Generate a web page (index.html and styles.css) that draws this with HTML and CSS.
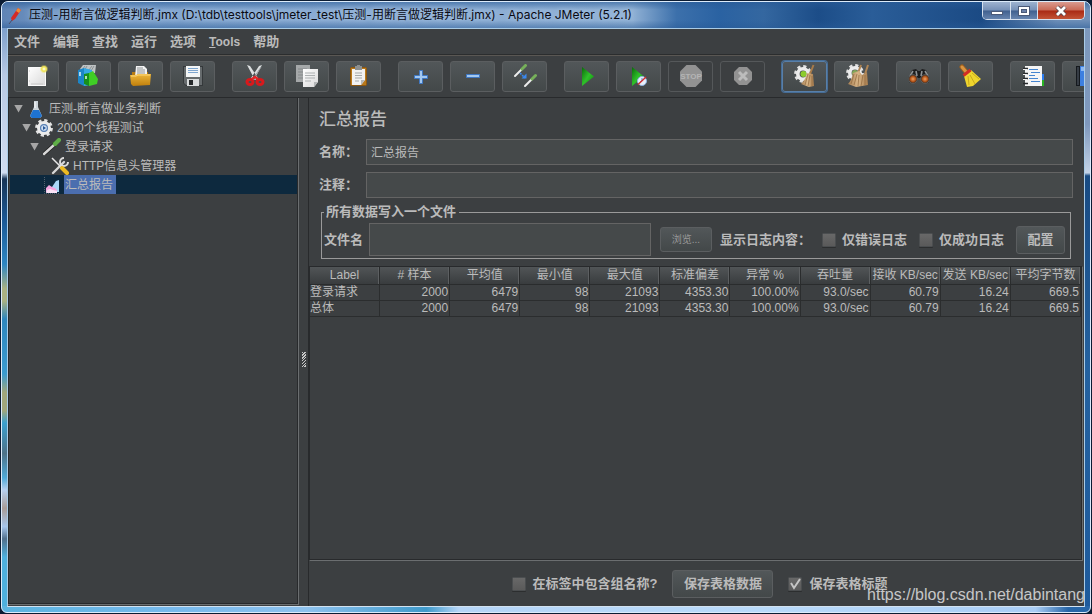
FILE: index.html
```html
<!DOCTYPE html>
<html lang="zh-CN">
<head>
<meta charset="utf-8">
<title>Apache JMeter (5.2.1)</title>
<link rel="stylesheet" href="styles.css">
</head>
<body>
<svg class="defs" width="0" height="0" aria-hidden="true">
  <defs>
    <linearGradient id="paper" x1="0" y1="0" x2="1" y2="1"><stop offset="0" stop-color="#fff"/><stop offset="1" stop-color="#d9d9d9"/></linearGradient>
    <linearGradient id="gold" x1="0" y1="0" x2="0" y2="1"><stop offset="0" stop-color="#edb73c"/><stop offset="1" stop-color="#c07f0c"/></linearGradient>
    <linearGradient id="green" x1="0" y1="0" x2="1" y2="1"><stop offset="0" stop-color="#0b6a0b"/><stop offset=".5" stop-color="#2fc02a"/><stop offset="1" stop-color="#0a8a0a"/></linearGradient>
    <linearGradient id="straw" x1="0" y1="0" x2="1" y2="0"><stop offset="0" stop-color="#a67f54"/><stop offset=".5" stop-color="#d8b587"/><stop offset="1" stop-color="#a67c4e"/></linearGradient>
    <radialGradient id="lens"><stop offset="0" stop-color="#f0a060"/><stop offset=".6" stop-color="#b5561a"/><stop offset="1" stop-color="#3a1d0c"/></radialGradient>
    <radialGradient id="glow"><stop offset="0" stop-color="#fff"/><stop offset=".4" stop-color="#f7ee6a"/><stop offset="1" stop-color="#f0e040" stop-opacity="0"/></radialGradient>
    <g id="gear">
      <circle r="7.4" fill="none" stroke="#e2e2e2" stroke-width="3" stroke-dasharray="3.1 2.71"/>
      <circle r="5.2" fill="none" stroke="#ececec" stroke-width="3.6"/>
    </g>
    <g id="pipette">
      <path d="M1 10 6.500 4.500" stroke="#4e5254" stroke-width="3.400" stroke-linecap="round"/>
      <path d="M0 11 6.500 4.500" stroke="#ececec" stroke-width="2" stroke-linecap="round"/>
      <path d="M7 4 10.500 .5" stroke="#76b05a" stroke-width="3" stroke-linecap="round"/>
    </g>
  </defs>
</svg>

<div class="window">
  <header class="titlebar">
    <svg class="app-icon" viewBox="0 0 14 18" aria-hidden="true"><path d="M10 1 13 3 7 12 4 14 3 11Z" fill="#d42a25"/><path d="M10 1 13 3 11 6 8 4Z" fill="#f08a35"/><path d="M4 13 1 17" stroke="#49506a"/></svg>
    <h1 class="window-title">压测-用断言做逻辑判断.jmx (D:\tdb\testtools\jmeter_test\压测-用断言做逻辑判断.jmx) - Apache JMeter (5.2.1)</h1>
    <div class="window-controls">
      <button class="control" type="button" aria-label="最小化"><svg viewBox="0 0 14 12"><rect x="1.500" y="6.500" width="11" height="3" fill="#fff" stroke="#4b5a78"/></svg></button>
      <button class="control" type="button" aria-label="最大化"><svg viewBox="0 0 14 12"><rect x="1.500" y="1.500" width="11" height="9" fill="#fff" stroke="#4b5a78"/><rect x="4.500" y="4.500" width="5" height="3" fill="#6a80a8" stroke="#4b5a78"/></svg></button>
      <button class="control control-close" type="button" aria-label="关闭"><svg viewBox="0 0 14 12"><path d="M3 2 11 10M11 2 3 10" stroke="#57424a" stroke-width="4.500"/><path d="M3 2 11 10M11 2 3 10" stroke="#fff" stroke-width="2.800"/></svg></button>
    </div>
  </header>

  <div class="client">
    <nav class="menubar">
      <button type="button">文件</button>
      <button type="button">编辑</button>
      <button type="button">查找</button>
      <button type="button">运行</button>
      <button type="button">选项</button>
      <button class="menu-latin" type="button"><u>T</u>ools</button>
      <button type="button">帮助</button>
    </nav>

    <div class="toolbar">
      <div class="tool-group">
        <button class="tool" type="button" aria-label="新建"><svg viewBox="0 0 25 25"><rect x="4.500" y="3.500" width="17" height="18" fill="url(#paper)" stroke="#fafafa"/><path d="M5 7h1M5 17h1M7 20h12" stroke="#c9c9c9"/><circle cx="20" cy="5" r="4.500" fill="url(#glow)"/><circle cx="20" cy="5" r="2.500" fill="none" stroke="#ece05a"/></svg></button>
        <button class="tool" type="button" aria-label="模板"><svg viewBox="0 0 25 25"><path d="M4 5 7 1h5l-1 8H5zM10 5l2-4h8l-1 8h-8z" fill="#bfc3c4"/><path d="M6 6 9 2M8 7l3-5M13 6l3-4M15 7l3-5" stroke="#8c9193"/><path d="M2 6 8 4v18l-6-3z" fill="#1c86c8"/><path d="M8 4 16 6v15l-8 1z" fill="#35a9e4"/><path d="M4 8v4" stroke="#dff2fb" stroke-width="1.500"/><path d="M8 10 13 9v13l-5-2z" fill="#178f1c"/><path d="M13 9 17 7l5 8-1 5-8 2z" fill="#3fce25"/><path d="M10 12v3" stroke="#e3fbe0" stroke-width="1.500"/></svg></button>
        <button class="tool" type="button" aria-label="打开"><svg viewBox="0 0 25 25"><path d="M4 10V8h16v5H4z" fill="#b77b12"/><path d="M8 2h8l3 3v8H7z" fill="#f3f3f3"/><path d="M9 4h6M9 6h8M9 8h8M9 10h8" stroke="#8e9395"/><path d="M2 11h6l2-1h13l-1 11-17 1-2-2z" fill="url(#gold)"/><path d="M3 12h5l2-1h12" stroke="#ffd878" fill="none"/></svg></button>
        <button class="tool" type="button" aria-label="保存"><svg viewBox="0 0 25 25"><path d="M3 2h20v20H6l-3-3z" fill="#35393b"/><path d="M4 3h18v18H6l-2-2z" fill="#666b6d"/><rect x="6" y="2" width="14" height="11" fill="#f3f5f6"/><path d="M8 4.500h10M8 6.500h10M8 8.500h10" stroke="#7fa6cf"/><rect x="7" y="15" width="12" height="7" fill="#d9dcdd"/><rect x="9" y="16" width="4" height="5" fill="#25282a"/></svg></button>
      </div>
      <div class="tool-group">
        <button class="tool" type="button" aria-label="剪切"><svg viewBox="0 0 25 25"><path d="M5 1 8 2l8 12-3 2zM20 1l-3 1-8 12 3 2z" fill="#dcdfe0"/><path d="M19 3 11 15" stroke="#9ba0a2"/><ellipse cx="8" cy="18" rx="3" ry="2.600" fill="none" stroke="#d8191c" stroke-width="3"/><ellipse cx="18" cy="18" rx="3" ry="2.600" fill="none" stroke="#d8191c" stroke-width="3"/><path d="M10 15l3-2 3 2" stroke="#e22326" stroke-width="2.500" fill="none"/></svg></button>
        <button class="tool" type="button" aria-label="复制"><svg viewBox="0 0 25 25"><path d="M2 1h14v17H2z" fill="#a5a8a9"/><path d="M4 5h9M4 8h9M4 11h9M4 14h9" stroke="#85898a"/><path d="M9 5h15v13l-4 5H9z" fill="url(#paper)"/><path d="M11 9h10M11 11.500h10M11 14h10M11 17h6" stroke="#acb0b1"/><path d="M24 18h-4v5z" fill="#b3b6b7"/></svg></button>
        <button class="tool" type="button" aria-label="粘贴"><svg viewBox="0 0 25 25"><rect x="4.500" y="3.500" width="16" height="18" rx="1" fill="#b8791c" stroke="#8c5710"/><path d="M6 5h13v11l-4 5H6z" fill="#f2f2f2"/><path d="M9 2h7v4H9zM11 1h3v2h-3z" fill="#8c9091"/><path d="M9 9h7M9 11.500h7M9 14h7M9 17h4" stroke="#a5a9aa"/><path d="M19 16h-4v5z" fill="#b5b8b9"/></svg></button>
      </div>
      <div class="tool-group">
        <button class="tool" type="button" aria-label="展开"><svg viewBox="0 0 25 25"><path d="M11.500 6.500h3v5h5v3h-5v5h-3v-5h-5v-3h5z" fill="#a3c8f0" stroke="#3f78c4"/></svg></button>
        <button class="tool" type="button" aria-label="折叠"><svg viewBox="0 0 25 25"><path d="M6.500 10.500h13v3h-13z" fill="#a3c8f0" stroke="#3f78c4"/></svg></button>
        <button class="tool" type="button" aria-label="切换"><svg viewBox="0 0 25 25"><use href="#pipette" x="3" y="1"/><use href="#pipette" x="13" y="11"/><path d="M8 9 13 14" stroke="#3987f0" stroke-width="1.600" stroke-dasharray="2 1"/><path d="M14.500 9.500v5h-5z" fill="#3987f0"/></svg></button>
      </div>
      <div class="tool-group">
        <button class="tool" type="button" aria-label="启动"><svg viewBox="0 0 25 25"><path d="M8 3 20 12.500 8 22z" fill="url(#green)"/></svg></button>
        <button class="tool" type="button" aria-label="无停顿启动"><svg viewBox="0 0 25 25"><path d="M6 3 18 12.500 6 22z" fill="url(#green)"/><circle cx="16" cy="17" r="4.500" fill="#e7effa" stroke="#8fb2e0"/><path d="M16 14v3l-2 1" stroke="#5787c6" fill="none"/><path d="M12 20.500 20 13" stroke="#d52d2d" stroke-width="1.400"/></svg></button>
        <button class="tool tool-off" type="button" aria-label="停止" disabled><svg viewBox="0 0 25 25"><path d="M8.500 1h9L24 7.500v9L17.500 23h-9L2 16.500v-9z" fill="#929292"/><text class="stop-word" x="13" y="15" text-anchor="middle">STOP</text></svg></button>
        <button class="tool tool-off" type="button" aria-label="关闭测试" disabled><svg viewBox="0 0 25 25"><path d="M9 3h8l5 5v8l-5 5H9l-5-5V8z" fill="#929292"/><path d="M9 8l8 8M17 8l-8 8" stroke="#bcbcbc" stroke-width="3"/></svg></button>
      </div>
      <div class="tool-group">
        <button class="tool tool-focus" type="button" aria-label="清除"><svg viewBox="0 0 25 25"><use href="#gear" x="11" y="10"/><circle cx="11.500" cy="10" r="3" fill="#8ccc2c"/><path d="M21.500 1 18 10" stroke="#a87b49" stroke-width="2"/><path d="M15 9l6 1 1 12-5 1-8-3c3-3 5-6 6-11z" fill="url(#straw)"/><path d="M16 10l-3 11M18 11l-2 11M20 12v10" stroke="#8f683e" stroke-width=".7"/></svg></button>
        <button class="tool" type="button" aria-label="清除全部"><svg viewBox="0 0 25 25"><use href="#gear" x="11" y="9"/><circle cx="11" cy="9" r="3" fill="#84a85a"/><path d="M17 1 14 9M24 1l-3 9" stroke="#b08554" stroke-width="2"/><path d="M9 9l6-2 3 4 5-3 1 13-6 1-6 1-8-3c3-3 4-7 5-11z" fill="url(#straw)"/><path d="M10 10 7 20M13 10l-3 11M15 11l-1 11M19 11l-2 11M21 11v10" stroke="#8f683e" stroke-width=".7"/></svg></button>
      </div>
      <div class="tool-group">
        <button class="tool" type="button" aria-label="查找"><svg viewBox="0 0 25 25"><path d="M6 6l4-1 2 2h2l2-2 4 1 4 9-2 4-5-1-2-4h-4l-2 4-5 1-2-4z" fill="#1c1d1e"/><path d="M7 7 4 12M19 7l3 5M10 7l1 5M16 7l-1 5" stroke="#8e9294" stroke-width="1.600"/><circle cx="7" cy="15" r="4.300" fill="url(#lens)" stroke="#5c5f60"/><circle cx="19" cy="15" r="4.300" fill="url(#lens)" stroke="#5c5f60"/></svg></button>
        <button class="tool" type="button" aria-label="重置查找"><svg viewBox="0 0 25 25"><path d="M4 3 9 9" stroke="#9d5f1d" stroke-width="5" stroke-linecap="round"/><path d="M4 3 9 9" stroke="#d99442" stroke-width="3" stroke-linecap="round"/><path d="M6 12 13 6l10 9-8 7-6 1z" fill="#efd52d"/><path d="M10 12l1 9M12 11l5 9M14 9l7 6" stroke="#c9ab1c"/><path d="M5.500 11.500 12.500 6" stroke="#d42c24" stroke-width="3"/></svg></button>
      </div>
      <div class="tool-group">
        <button class="tool" type="button" aria-label="函数助手"><svg viewBox="0 0 25 25"><path d="M21 10h3v6h-3z" fill="#2c7df0"/><path d="M21 16h3v6h-3z" fill="#27b323"/><path d="M5 2h17v20H5z" fill="#f5f5f5"/><path d="M9 5.500h9M11 8.500h9M9 11.500h6M9 14.500h9M11 17.500h9" stroke="#4585d0"/><path d="M3 4.500h5M3 9.500h5M3 14.500h5M3 19.500h5" stroke="#292c2e" stroke-width="1.300"/><path d="M3 5.500h4M3 10.500h4M3 15.500h4" stroke="#eee"/></svg></button>
        <button class="tool" type="button" aria-label="帮助"><svg viewBox="0 0 25 25"><path d="M4 2h5v20H4z" fill="#15191e"/><path d="M6 3v18" stroke="#59616b"/><path d="M8 2h15v20H8z" fill="#3d7fe0"/><path d="M9 3h13v4H9z" fill="#8ab8f4"/></svg></button>
      </div>
    </div>

    <main class="workspace">
      <aside class="tree-pane">
        <ul class="tree">
          <li class="node level-0"><span class="twisty"></span><svg viewBox="0 0 18 18"><path d="M7 1h4v6l4 9-2 2H5l-2-2 4-9z" fill="#ccd4da"/><path d="M6 10h6l3 6-2 2H5l-2-2z" fill="#1e73d2"/><path d="M8 2v6" stroke="#fff"/></svg><span class="node-label">压测-断言做业务判断</span></li>
          <li class="node level-1"><span class="twisty"></span><svg viewBox="0 0 18 18"><use href="#gear" x="9" y="9"/><circle cx="9" cy="9" r="4" fill="#5c84b8"/><circle cx="9" cy="9" r="2.800" fill="#cfe0f4"/><path d="M8 7l3 2-3 2z" fill="#2b5a99"/></svg><span class="node-label">2000个线程测试</span></li>
          <li class="node level-2"><span class="twisty"></span><svg viewBox="0 0 18 18"><path d="M2 15 11 7" stroke="#222" stroke-width="4" stroke-linecap="round"/><path d="M1 16 11 7" stroke="#d8d8d8" stroke-width="2.400" stroke-linecap="round"/><path d="M10 4l4 4" stroke="#315f24" stroke-width="2"/><path d="M12 6l4-4" stroke="#5fae48" stroke-width="4" stroke-linecap="round"/></svg><span class="node-label">登录请求</span></li>
          <li class="node level-3"><span class="twisty twisty-none"></span><svg viewBox="0 0 18 18"><path d="M2 16 13 5" stroke="#d7d7d7" stroke-width="2.400" stroke-linecap="round"/><path d="M13 1a4 4 0 1 0 4 4" stroke="#dcdcdc" stroke-width="2" fill="none"/><path d="M1 1 10 10" stroke="#e6e6e6" stroke-width="1.500"/><path d="M11 11l5 5" stroke="#eebb22" stroke-width="4" stroke-linecap="round"/></svg><span class="node-label">HTTP信息头管理器</span></li>
          <li class="node level-2 node-selected"><span class="twisty twisty-none"></span><svg viewBox="0 0 18 18"><path d="M1.500 1v16.500H17" stroke="#54606c" stroke-dasharray="1 1" fill="none"/><path d="M9 11l4-6 3-1v12H9z" fill="#a9d7f7"/><path d="M3 16v-4l3-3 3 2 3 1 2 2v2z" fill="#f4a5df"/><path d="M4 14l3-1 3 1 4 1v2H3z" fill="#fbe3f6"/></svg><span class="node-label">汇总报告</span></li>
        </ul>
      </aside>

      <div class="splitter"><span class="grip"></span></div>

      <section class="report">
        <div class="form">
          <h2 class="report-title">汇总报告</h2>
          <div class="field"><label for="name">名称：</label><input class="text" id="name" type="text" value="汇总报告"></div>
          <div class="field"><label for="comment">注释：</label><input class="text" id="comment" type="text"></div>
          <fieldset class="output">
            <legend>所有数据写入一个文件</legend>
            <div class="output-row">
              <label for="file">文件名</label>
              <input class="text text-file" id="file" type="text">
              <button class="button button-browse" type="button">浏览...</button>
              <span class="log-label">显示日志内容：</span>
              <label class="check"><input type="checkbox">仅错误日志</label>
              <label class="check"><input type="checkbox">仅成功日志</label>
              <button class="button button-config" type="button">配置</button>
            </div>
          </fieldset>
        </div>

        <div class="table-pane">
          <table class="results">
            <thead><tr><th>Label</th><th># 样本</th><th>平均值</th><th>最小值</th><th>最大值</th><th>标准偏差</th><th>异常 %</th><th>吞吐量</th><th>接收 KB/sec</th><th>发送 KB/sec</th><th>平均字节数</th></tr></thead>
            <tbody>
              <tr><td>登录请求</td><td>2000</td><td>6479</td><td>98</td><td>21093</td><td>4353.30</td><td>100.00%</td><td>93.0/sec</td><td>60.79</td><td>16.24</td><td>669.5</td></tr>
              <tr><td>总体</td><td>2000</td><td>6479</td><td>98</td><td>21093</td><td>4353.30</td><td>100.00%</td><td>93.0/sec</td><td>60.79</td><td>16.24</td><td>669.5</td></tr>
            </tbody>
          </table>
        </div>

        <footer class="actions">
          <label class="check"><input type="checkbox">在标签中包含组名称?</label>
          <button class="button button-save" type="button">保存表格数据</button>
          <label class="check"><input type="checkbox" checked>保存表格标题</label>
        </footer>
      </section>
    </main>
  </div>
  <span class="watermark">https://blog.csdn.net/dabintang</span>
</div>
</body>
</html>
```
FILE: styles.css
```css
* { box-sizing: border-box; }

:root {
  --bg: #3c3f41;
  --ink: #bbbbbb;
  --line-dark: #282a2c;
  --line-light: #6b6e70;
}

body {
  margin: 0;
  height: 100vh;
  padding: 1px;
  background: #0b1c33;
  color: var(--ink);
  font: 12px/16px "Liberation Sans", "Noto Sans CJK SC", sans-serif;
}

.defs { position: absolute; }

button, input { font: inherit; color: inherit; margin: 0; }

.window {
  position: relative;
  height: 100%;
  display: flex;
  flex-direction: column;
  padding: 0 5px 5px;
  border: 1px solid #dcebfa;
  border-radius: 7px 7px 6px 6px;
  background:
    linear-gradient(90deg, #5bb4e0, #78b9ec 16%, #8ec2ee 28%, #3f9acb 39%, #b5d5f7 42%, #b9dafa 70%, #a9cdf5 95%, #2766a8 98%) bottom / 100% 6px no-repeat,
    linear-gradient(#5d88bd, #b7c9e4 12%, #d0dcf0 28%, #173456 29%, #1c5a97 36%, #2e86c2 43%, #a9b183 47%, #a9b183 49%, #2e86bd 52%, #3b9bcf 61%, #a0a67c 64%, #a0a67c 67%, #3ba0cf 69%, #4e7288 74%, #50aad8 78%, #b7d0f0 80%, #a89c97 83%, #a6c6ec 86%, #51708c 88%, #4eb0de 91%) left / 6px 100% no-repeat,
    linear-gradient(#7d99bd, #7f98bd 20%, #c3d2e6 28%, #184a82 28.500%, #24619f 60%, #1d5a9c) right / 6px 100% no-repeat,
    #5585bb;
}

.titlebar {
  display: flex;
  align-items: flex-start;
  gap: 7px;
  height: 26px;
  flex: none;
  margin: 0 -5px;
  padding-left: 6px;
  border-radius: 6px 6px 0 0;
  background:
    linear-gradient(rgba(40, 90, 150, .6), transparent 30%, transparent 70%, rgba(40, 90, 150, .5)),
    linear-gradient(90deg, #5f84b5, #7ba0cb 8%, #86a8d0 30%, #8fb0d4 58%, #3c70ab 62%, #2a62a2 66%, #3467a0 70%, #1c4d88 75%, #2a5d98 80%, #1b4a84 90%, #6e8fb8 97%);
}

.app-icon { width: 14px; height: 18px; margin-top: 5px; }

.window-title {
  flex: 1;
  margin: 0;
  padding-top: 5px;
  font: 12px/16px Inter, "Noto Sans CJK SC", sans-serif;
  color: #0a0a12;
  white-space: nowrap;
  text-shadow: 0 0 6px #b9d0ec;
}

.window-controls {
  display: flex;
  margin-right: 5px;
  border: 1px solid #d5e0ee;
  border-top: 0;
  border-radius: 0 0 5px 5px;
  overflow: hidden;
}

.control {
  display: flex;
  align-items: center;
  justify-content: center;
  width: 27px;
  height: 17px;
  padding: 0;
  border: 0;
  border-right: 1px solid #d5e0ee;
  background: linear-gradient(#9db2cf, #7690b6 48%, #40608f 52%, #6684ae);
}

.control:first-child { width: 28px; }
.control svg { width: 14px; height: 12px; }

.control-close {
  width: 46px;
  border-right: 0;
  background: linear-gradient(#d99b90, #c96955 48%, #a92914 52%, #c25336);
}

.client {
  flex: 1;
  min-height: 0;
  display: flex;
  flex-direction: column;
  border: 1px solid #a9cbe6;
  border-bottom-color: #d2e2f0;
  background: var(--bg);
}

.menubar {
  display: flex;
  gap: 13px;
  height: 26px;
  flex: none;
  padding: 0 6px;
  border-bottom: 1px solid #2b2d2e;
  box-shadow: 0 1px #5a5753;
}

.menubar button {
  padding: 0;
  border: 0;
  background: none;
  font-weight: bold;
  font-size: 13px;
}

.menubar .menu-latin { font-size: 12px; }

.toolbar {
  display: flex;
  gap: 17px;
  flex: none;
  height: 43px;
  padding: 6px 0 0 6px;
  overflow: hidden;
  border-bottom: 1px solid var(--line-dark);
}

.tool-group { display: flex; gap: 7px; flex: none; }

.tool {
  display: flex;
  align-items: center;
  justify-content: center;
  width: 45px;
  height: 31px;
  padding: 0;
  border: 1px solid #5b5e60;
  border-radius: 3px;
  background: linear-gradient(#525759, #434849);
}

.tool svg { width: 25px; height: 25px; flex: none; }
.tool-off { background: var(--bg); border-color: #55585a; }
.tool-focus { border-color: #587fa9; box-shadow: 0 0 0 1px #466d96; }
.stop-word { font: bold 8px "Liberation Sans", sans-serif; fill: #b5b5b5; }

.workspace { flex: 1; min-height: 0; display: flex; }

.tree-pane {
  width: 291px;
  flex: none;
  padding: 1px 0 0 2px;
  margin-bottom: 1px;
  border: 1px solid var(--line-light);
  border-width: 0 1px 1px 0;
  box-shadow: inset 1px 0 var(--line-dark), inset -1px -1px var(--line-dark);
}

.tree { list-style: none; margin: 0; padding: 0 1px 0 0; }

.node {
  display: flex;
  align-items: center;
  height: 19px;
  padding-left: 4px;
}

.node svg { width: 18px; height: 18px; margin: 0 3px 0 4px; }
.level-1 { padding-left: 12px; }
.level-2 { padding-left: 20px; }
.level-3 { padding-left: 28px; }

.twisty {
  width: 9px;
  height: 8px;
  background: #a6a6a6;
  clip-path: polygon(0 0, 100% 0, 50% 100%);
}

.twisty-none { background: none; }
.node-label { padding: 2px 1px 0; line-height: 17px; }
.node-selected { background: #0d293e; }
.node-selected .node-label { padding-right: 3px; background: #4b6eaf; }

.splitter {
  width: 9px;
  flex: none;
  display: flex;
  align-items: center;
  justify-content: center;
}

.grip {
  width: 4px;
  height: 15px;
  margin-top: 14px;
  background: repeating-linear-gradient(135deg, #c8c8c8 0 1px, #3c3f41 1px 2px);
}

.report {
  flex: 1;
  min-width: 0;
  display: flex;
  flex-direction: column;
  border-left: 1px solid var(--line-dark);
}

.form { padding: 10px 11px 7px 10px; }

.report-title {
  margin: 0 0 8px;
  font-size: 17px;
  line-height: 23px;
  font-weight: 500;
}

.field {
  display: flex;
  align-items: center;
  margin-bottom: 7px;
  font-size: 13px;
}

.field label { width: 47px; font-weight: bold; }

.text {
  flex: 1;
  min-width: 0;
  height: 26px;
  padding: 0 4px 2px;
  border: 1px solid #646464;
  background: #45494a;
  font-size: 12px;
}

.output {
  margin: 0 2px;
  padding: 4px 5px 2px 2px;
  border: 1px solid #9a9a9a;
  font-size: 13px;
  font-weight: bold;
}

.output legend { padding: 0 3px 0 2px; line-height: 14px; }
.output-row { display: flex; align-items: center; }
.text-file { height: 33px; margin: 0 9px 0 6px; }

.button {
  padding: 0;
  border: 1px solid #5b5e60;
  border-radius: 3px;
  background: linear-gradient(#525759, #434849);
}

.button-browse { width: 52px; height: 25px; font-size: 10px; font-weight: normal; color: #999; }
.log-label { margin: 0 11px 0 8px; }
.button-config { width: 49px; height: 28px; }

.check { display: flex; align-items: center; gap: 6px; white-space: nowrap; }
.output .check { margin-right: 12px; }

.check input {
  appearance: none;
  width: 14px;
  height: 14px;
  border: 1px solid #4b4e50;
  border-radius: 1px;
  background: linear-gradient(#686868, #5a5a5a);
  box-shadow: 0 1px #2c2e2f;
}

.check input:checked {
  background: url("data:image/svg+xml,%3Csvg xmlns='http://www.w3.org/2000/svg' viewBox='0 0 12 12'%3E%3Cpath d='M2 5l3 5 6-9' fill='none' stroke='%23c4c4c4' stroke-width='2'/%3E%3C/svg%3E"), linear-gradient(#686868, #5a5a5a);
}

.table-pane {
  flex: 1;
  min-height: 0;
  margin-right: 1px;
  padding-right: 1px;
  border: 1px solid var(--line-dark);
  border-right-color: var(--line-light);
  border-bottom-color: var(--line-light);
  box-shadow: inset -1px -1px var(--line-dark);
}

.results {
  width: 100%;
  table-layout: fixed;
  border-collapse: separate;
  border-spacing: 0;
  white-space: nowrap;
}

.results th {
  height: 18px;
  padding: 0;
  font-weight: normal;
  line-height: 17px;
  border-right: 1px solid #2a2c2d;
  border-bottom: 1px solid #2a2c2d;
  box-shadow: inset -1px 0 #5c5f61;
  background: linear-gradient(#515557, #393c3e);
}

.results td {
  height: 16px;
  padding: 0 1px 0 0;
  line-height: 15px;
  text-align: right;
  border-right: 1px solid #2b2d2e;
  border-bottom: 1px solid #2b2d2e;
}

.results td:first-child { text-align: left; }

.actions {
  display: flex;
  align-items: center;
  justify-content: center;
  height: 45px;
  flex: none;
  padding-left: 6px;
  font-size: 13px;
  font-weight: bold;
}

.actions .check { gap: 7px; }
.button-save { width: 101px; height: 28px; margin: 0 15px; }

.watermark {
  position: absolute;
  right: 5px;
  bottom: 7px;
  font-size: 16px;
  line-height: 20px;
  color: rgba(225, 225, 225, .85);
}
```
